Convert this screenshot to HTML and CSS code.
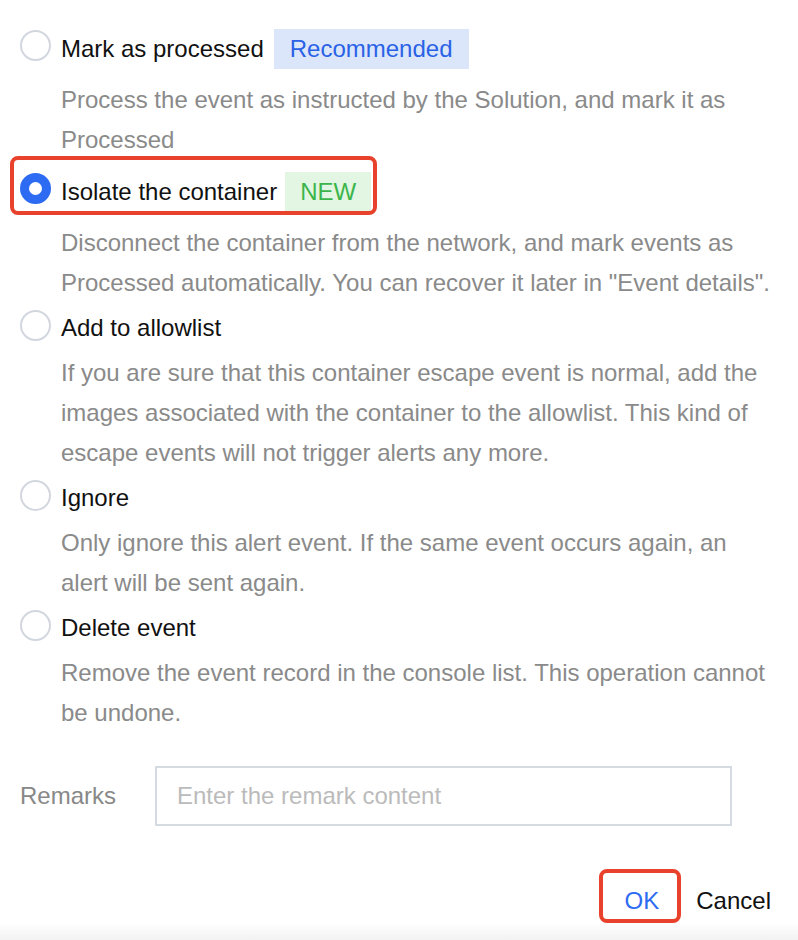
FILE: index.html
```html
<!DOCTYPE html>
<html lang="en">
<head>
    <meta charset="UTF-8">
    <meta name="viewport" content="width=device-width, initial-scale=1.0">
    <title>Handle event</title>
    <link rel="stylesheet" href="styles.css">
</head>
<body>

    <div class="dialog">
        <div class="option-list">

            <div class="option">
                <label class="option-head tagged">
                    <span class="radio"></span>
                    <span class="option-name">Mark as processed</span>
                    <span class="tag tag-blue">Recommended</span>
                </label>
                <p class="option-desc">Process the event as instructed by the Solution, and mark it as Processed</p>
            </div>

            <div class="option">
                <label class="option-head tagged">
                    <span class="radio checked"></span>
                    <span class="option-name">Isolate the container</span>
                    <span class="tag tag-green">NEW</span>
                    <span class="highlight"></span>
                </label>
                <p class="option-desc">Disconnect the container from the network, and mark events as Processed automatically. You can recover it later in "Event details".</p>
            </div>

            <div class="option">
                <label class="option-head">
                    <span class="radio"></span>
                    <span class="option-name">Add to allowlist</span>
                </label>
                <p class="option-desc">If you are sure that this container escape event is normal, add the images associated with the container to the allowlist. This kind of escape events will not trigger alerts any more.</p>
            </div>

            <div class="option">
                <label class="option-head">
                    <span class="radio"></span>
                    <span class="option-name">Ignore</span>
                </label>
                <p class="option-desc">Only ignore this alert event. If the same event occurs again, an alert will be sent again.</p>
            </div>

            <div class="option">
                <label class="option-head">
                    <span class="radio"></span>
                    <span class="option-name">Delete event</span>
                </label>
                <p class="option-desc">Remove the event record in the console list. This operation cannot be undone.</p>
            </div>

        </div>

        <div class="remark-row">
            <label class="remark-label" for="remark">Remarks</label>
            <input type="text" id="remark" class="remark-input" placeholder="Enter the remark content">
        </div>

        <div class="dialog-footer">
            <button type="button" class="btn btn-ok">OK</button>
            <button type="button" class="btn btn-cancel">Cancel</button>
        </div>
    </div>

</body>
</html>
```

FILE: styles.css
```css
html {
    height: 100%;
}

body {
    margin: 0;
    padding: 0;
    min-height: 100%;
    font-family: "Liberation Sans", Arial, sans-serif;
    font-size: 24px;
    color: #111;
    background: linear-gradient(to bottom, #fff 0, #fff 922px, #f2f2f2 940px);
}

.dialog {
    padding: 22px 27px 0 20px;
}

/* options */

.option-list {
    display: flex;
    flex-direction: column;
    gap: 5px;
}

.option {
    display: flex;
    flex-direction: column;
    gap: 5px;
}

.option-head {
    position: relative;
    display: flex;
    align-items: center;
    height: 40px;
    line-height: 40px;
    cursor: pointer;
}

.option-head.tagged {
    height: 53px;
}

.radio {
    box-sizing: border-box;
    width: 31px;
    height: 31px;
    margin-right: 10px;
    margin-bottom: 6px;
    border: 2px solid #d2d7df;
    border-radius: 50%;
    background-color: #fff;
    flex-shrink: 0;
}

.radio.checked {
    border: 9px solid #2d6cf2;
}

.option-name {
    color: #111;
}

.option-desc {
    margin: 0 0 0 41px;
    width: 716px;
    line-height: 40px;
    color: #8a8a8a;
}

.tag {
    display: inline-block;
    height: 40px;
    line-height: 40px;
    padding: 0 16px;
    margin-left: 10px;
}

.tag-blue {
    background-color: #dce6fa;
    color: #2a62e6;
}

.tag-green {
    margin-left: 8px;
    padding: 0 15px;
    background-color: #e3f6e3;
    color: #3bb54b;
}

/* red call-out frame around the chosen option */
.highlight {
    position: absolute;
    left: -10px;
    top: -9px;
    width: 367px;
    height: 59px;
    box-sizing: border-box;
    border: 4px solid #e8412c;
    border-radius: 8px;
    pointer-events: none;
}

/* remarks */

.remark-row {
    display: flex;
    align-items: center;
    margin-top: 33px;
}

.remark-label {
    width: 135px;
    color: #888;
}

.remark-input {
    box-sizing: border-box;
    width: 577px;
    height: 60px;
    padding: 0 20px;
    border: 2px solid #d6dae1;
    border-radius: 0;
    font-family: inherit;
    font-size: 24px;
    color: #111;
    outline: none;
}

.remark-input::placeholder {
    color: #bbb;
}

/* footer */

.dialog-footer {
    display: flex;
    justify-content: flex-end;
    align-items: baseline;
    margin-top: 43px;
}

.btn {
    border: none;
    background: none;
    font-family: inherit;
    font-size: 24px;
    line-height: 36px;
    cursor: pointer;
}

.btn-ok {
    padding: 10px 18px 0 22px;
    border: 4px solid #e8412c;
    border-radius: 8px;
    color: #2d6cf2;
}

.btn-cancel {
    padding: 0;
    margin-left: 15px;
    color: #111;
}
```
